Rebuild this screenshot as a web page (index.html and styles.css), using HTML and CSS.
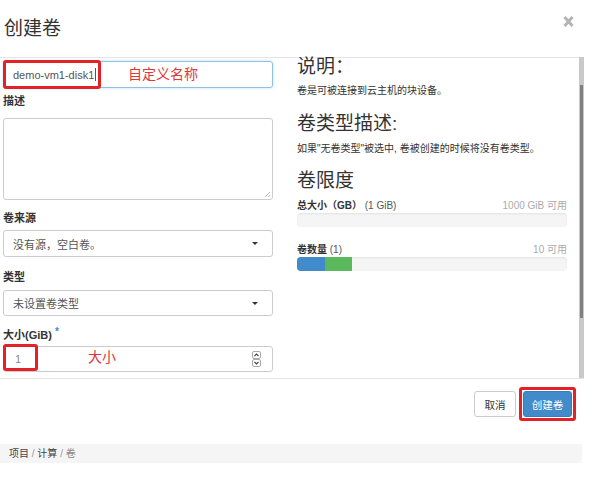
FILE: index.html
```html
<!DOCTYPE html>
<html lang="zh-CN">
<head>
<meta charset="utf-8">
<title>创建卷</title>
<link rel="stylesheet" href="styles.css">
</head>
<body>
<div class="modal">
  <div class="modal-header">
    <h3 class="title">创建卷</h3>
    <span class="close">
      <svg width="11" height="13" viewBox="0 0 11 13"><path d="M1.5 2 L9.5 11 M9.5 2 L1.5 11" stroke="#b4b4b4" stroke-width="3"/></svg>
    </span>
  </div>
  <div class="modal-body">
    <div class="body-content">
      <div class="col col-left">
        <div class="field field-name">
          <div class="control control-focus">demo-vm1-disk1<span class="caret"></span></div>
          <span class="mark mark-name"></span>
          <span class="note note-name">自定义名称</span>
        </div>
        <div class="label label-desc">描述</div>
        <div class="control textarea"><span class="grip"></span></div>
        <div class="label label-src">卷来源</div>
        <div class="control select select-src">没有源，空白卷。<span class="arrow"></span></div>
        <div class="label label-type">类型</div>
        <div class="control select select-type">未设置卷类型<span class="arrow"></span></div>
        <div class="label label-size">大小(GiB) <span class="req">*</span></div>
        <div class="field field-size">
          <div class="control control-num">1
            <svg class="spin" width="9" height="16" viewBox="0 0 9 16"><rect x="0.5" y="0.5" width="8" height="7" rx="1.5" fill="#fff" stroke="#aaa"/><rect x="0.5" y="8.5" width="8" height="7" rx="1.5" fill="#fff" stroke="#aaa"/><path d="M2.5 5 L4.5 3 L6.5 5" fill="none" stroke="#444" stroke-width="1.1"/><path d="M2.5 11 L4.5 13 L6.5 11" fill="none" stroke="#444" stroke-width="1.1"/></svg>
          </div>
          <span class="mark mark-size"></span>
          <span class="note note-size">大小</span>
        </div>
      </div>
      <div class="col col-right">
        <h4 class="heading h-first">说明：</h4>
        <p class="text t-first">卷是可被连接到云主机的块设备。</p>
        <h4 class="heading h-second">卷类型描述:</h4>
        <p class="text t-second">如果"无卷类型"被选中, 卷被创建的时候将没有卷类型。</p>
        <h4 class="heading h-third">卷限度</h4>
        <div class="quota-row q-first">
          <span><b>总大小（GB）</b> <span class="muted">(1 GiB)</span></span>
          <span class="avail">1000 GiB 可用</span>
        </div>
        <div class="bar"></div>
        <div class="quota-row q-second">
          <span><b>卷数量</b> <span class="muted">(1)</span></span>
          <span class="avail">10 可用</span>
        </div>
        <div class="bar"><span class="seg seg-blue"></span><span class="seg seg-green"></span></div>
      </div>
    </div>
    <div class="scrollbar"><div class="thumb"></div></div>
  </div>
  <div class="modal-footer">
    <span class="btn btn-cancel">取消</span>
    <span class="mark-btn"><span class="btn btn-primary">创建卷</span></span>
  </div>
</div>
<div class="breadcrumb">项目 <span class="sep">/</span> 计算 <span class="sep">/</span> <span class="active">卷</span></div>
</body>
</html>
```

FILE: styles.css
```css
body {
  margin: 0;
  font-family: "Liberation Sans", "Noto Sans CJK SC", sans-serif;
  color: #333;
  background: #fff;
}

.modal {
  width: 584px;
}

.modal-header {
  box-sizing: border-box;
  height: 58px;
  border-bottom: 1px solid #e5e5e5;
  display: flex;
  justify-content: space-between;
  align-items: flex-start;
  padding: 0 10px 0 4px;
}

.title {
  margin: 18px 0 0;
  font-size: 19px;
  line-height: 22px;
  font-weight: normal;
  color: #333;
}

.close {
  margin-top: 15px;
  display: block;
  line-height: 0;
}

.modal-body {
  display: flex;
  height: 320px;
}

.body-content {
  box-sizing: border-box;
  width: 579px;
  display: flex;
  gap: 24px;
  padding-left: 3px;
}

.col {
  width: 270px;
  flex: none;
}

/* left column form */
.control {
  box-sizing: border-box;
  height: 27px;
  border: 1px solid #ccc;
  border-radius: 3px;
  font-size: 11px;
  color: #555;
  padding: 0 9px;
  display: flex;
  align-items: center;
  position: relative;
}

.control-focus {
  border-color: #8ebfe6;
  box-shadow: 0 0 3px rgba(102, 175, 233, 0.45);
}

.caret {
  display: inline-block;
  width: 1px;
  height: 13px;
  background: #555;
  margin-left: 1px;
}

.field {
  position: relative;
}

.field-name {
  margin-top: 3px;
}

.mark {
  position: absolute;
  border: 3px solid #e32228;
  border-radius: 3px;
  box-sizing: border-box;
}

.mark-name {
  left: 0;
  top: -1px;
  width: 98px;
  height: 29px;
}

.note {
  position: absolute;
  color: #e0353b;
  font-size: 14px;
  line-height: 16px;
}

.note-name {
  left: 125px;
  top: 5px;
}

.label {
  font-size: 11px;
  line-height: 14px;
  font-weight: bold;
  color: #333;
}

.label-desc { margin-top: 6px; }
.label-src { margin-top: 11px; }
.label-type { margin-top: 13px; }
.label-size { margin-top: 12px; }

.req {
  color: #428bca;
  font-size: 10px;
  vertical-align: top;
  position: relative;
  top: -3px;
}

.textarea {
  margin-top: 10px;
  height: 82px;
}

.grip {
  position: absolute;
  right: 2px;
  bottom: 2px;
  width: 5px;
  height: 5px;
  background: linear-gradient(135deg, transparent 45%, #bbb 45%, #bbb 55%, transparent 55%, transparent 75%, #bbb 75%, #bbb 85%, transparent 85%);
}

.select-src { margin-top: 5px; }
.select-type { margin-top: 6px; height: 26px; }

.arrow {
  position: absolute;
  right: 14px;
  top: 11px;
  width: 0;
  height: 0;
  border-left: 3px solid transparent;
  border-right: 3px solid transparent;
  border-top: 3px solid #333;
}

.field-size {
  margin-top: 4px;
}

.control-num {
  height: 26px;
  color: #888;
  padding-left: 11px;
}

.spin {
  position: absolute;
  right: 11px;
  top: 4px;
}

.mark-size {
  left: 0;
  top: -2px;
  width: 35px;
  height: 27px;
}

.note-size {
  left: 85px;
  top: 3px;
}

/* right column */
.heading {
  margin: 0;
  font-size: 19px;
  line-height: 20px;
  font-weight: normal;
  color: #333;
}

.h-first { margin-top: -1px; }
.h-second { margin-top: 15px; line-height: 22px; }
.h-third { margin-top: 14px; line-height: 22px; }

.text {
  margin: 0;
  font-size: 10px;
  line-height: 14px;
  color: #333;
}

.t-first { margin-top: 7px; }
.t-second { margin-top: 7px; }

.quota-row {
  display: flex;
  justify-content: space-between;
  font-size: 10px;
  line-height: 14px;
}

.q-first { margin-top: 7px; }
.q-second { margin-top: 16px; }

.muted {
  color: #555;
}

.avail {
  color: #aaa;
}

.bar {
  height: 14px;
  background: #f5f5f5;
  border-radius: 4px;
  box-shadow: inset 0 1px 2px rgba(0, 0, 0, 0.08);
  display: flex;
  overflow: hidden;
}

.seg {
  height: 100%;
}

.seg-blue {
  width: 28px;
  background: #428bca;
}

.seg-green {
  width: 27px;
  background: #5cb85c;
}

/* scrollbar */
.scrollbar {
  width: 5px;
  background: #c9c9c9;
  margin-top: -1px;
}

.thumb {
  margin-top: 28px;
  margin-left: 1px;
  width: 3px;
  height: 233px;
  background: #808080;
}

/* footer */
.modal-footer {
  border-top: 1px solid #e5e5e5;
  display: flex;
  justify-content: flex-end;
  align-items: center;
  padding: 8px 8px 23px 0;
}

.btn {
  box-sizing: border-box;
  height: 26px;
  border-radius: 3px;
  font-size: 10.5px;
  display: flex;
  align-items: center;
  justify-content: center;
}

.btn-cancel {
  width: 42px;
  border: 1px solid #ccc;
  background: #fff;
  color: #333;
  margin-right: 3px;
}

.mark-btn {
  border: 3px solid #e32228;
  border-radius: 3px;
  padding: 1px;
}

.btn-primary {
  width: 49px;
  background: #428bca;
  border: 1px solid #357ebd;
  color: #fff;
}

/* breadcrumb */
.breadcrumb {
  width: 582px;
  box-sizing: border-box;
  height: 19px;
  line-height: 19px;
  padding-left: 9px;
  font-size: 10px;
  color: #444;
  background: #f5f5f5;
}

.sep {
  color: #999;
}

.breadcrumb .active {
  color: #888;
}
```
